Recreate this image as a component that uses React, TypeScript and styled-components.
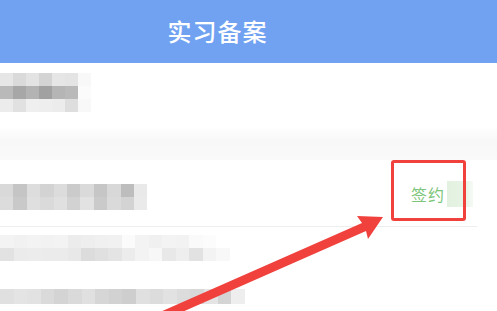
import * as React from "react";
import styled, { createGlobalStyle } from "styled-components";

const GlobalStyle = createGlobalStyle`
  html, body {
    margin: 0;
    padding: 0;
    background: #ffffff;
  }
  body {
    font-family: "Noto Sans CJK SC", "Noto Sans", sans-serif;
  }
`;

// blurred (mosaic) text blocks, one array of cell colours per row
const mosaics: { cell: number; rowHeight: number; rows: string[][] }[] = [
  {
    cell: 13,
    rowHeight: 13,
    rows: [
      ["#e6e6e6", "#dadada", "#e3e3e3", "#d4d4d4", "#e6e6e6", "#e4e4e4", "#f8f8f8"],
      ["#b9b9b9", "#a7a7a7", "#b3b3b3", "#a1a1a1", "#b5b5b5", "#b9b9b9", "#fbfbfb"],
      ["#ececec", "#e1e1e1", "#efefef", "#eeeeee", "#ececec", "#dedede", "#f8f8f8"],
    ],
  },
  {
    cell: 13.4,
    rowHeight: 13,
    rows: [
      ["#d9d9d9", "#c5c5c5", "#dddddd", "#d3d3d3", "#dcdcdc", "#cbcbcb", "#dadada", "#c6c6c6", "#d8d8d8", "#bdbdbd", "#e9e9e9"],
      ["#dcdcdc", "#c9c9c9", "#dfdfdf", "#dadada", "#e0e0e0", "#d2d2d2", "#e2e2e2", "#cacaca", "#dadada", "#d3d3d3", "#eaeaea"],
    ],
  },
  {
    cell: 13.5,
    rowHeight: 13,
    rows: [
      ["#f3f3f3", "#f1f1f1", "#f3f3f3", "#f2f2f2", "#f3f3f3", "#ececec", "#eeeeee", "#f0f0f0", "#f1f1f1", "#fbfbfb", "#f3f3f3", "#f0f0f0", "#f3f3f3", "#f2f2f2", "#fafafa", "#fcfcfc", "#ffffff"],
      ["#e2e2e2", "#ebebeb", "#ececec", "#ebebeb", "#ebebeb", "#e8e8e8", "#dcdcdc", "#e0e0e0", "#e4e4e4", "#ececec", "#f3f3f3", "#f7f7f7", "#e8e8e8", "#eeeeee", "#e2e2e2", "#f3f3f3", "#f8f8f8"],
    ],
  },
  {
    cell: 13.6,
    rowHeight: 15,
    rows: [
      ["#e0e0e0", "#e4e4e4", "#e2e2e2", "#dadada", "#d4d4d4", "#dadada", "#e0e0e0", "#d6d6d6", "#d2d2d2", "#cecece", "#e0e0e0", "#dcdcdc", "#e2e2e2", "#dcdcdc", "#d8d8d8", "#e4e4e4", "#d4d4d4", "#eeeeee"],
    ],
  },
];

const Page = styled.div`
  position: relative;
  width: 497px;
  height: 311px;
  overflow: hidden;
  background: #ffffff;
`;

const Header = styled.header`
  height: 63px;
  background: #71a2f2;
  display: flex;
  align-items: center;
  justify-content: center;
  padding-right: 62px;
  box-sizing: border-box;
`;

const Title = styled.h1`
  margin: 0;
  color: #ffffff;
  font-size: 24px;
  font-weight: 500;
  letter-spacing: 1px;
  line-height: 1;
  padding-bottom: 1px;
`;

const TopItem = styled.div`
  padding: 10px 0 16px;
`;

const Band = styled.div`
  height: 32px;
  background: linear-gradient(#fefefe, #f8f8f8 40%, #fafafa);
`;

const Row = styled.div`
  height: 66px;
  display: flex;
  align-items: center;
  justify-content: space-between;
  border-bottom: 1px solid #eeeeee;
  margin-right: 20px;
`;

const Item = styled.div<{ $pad: string }>`
  padding: ${(p) => p.$pad};
`;

const MosaicBox = styled.div`
  display: flex;
  flex-direction: column;
`;

const MosaicRow = styled.div<{ $h: number }>`
  display: flex;
  height: ${(p) => p.$h}px;
`;

const Cell = styled.span<{ $w: number; $c: string }>`
  width: ${(p) => p.$w}px;
  background: ${(p) => p.$c};
  flex: 0 0 auto;
`;

const Action = styled.div`
  display: flex;
  align-items: center;
  padding-top: 2px;
  margin-right: 4px;
`;

const SignText = styled.span`
  color: #7cc67a;
  font-size: 16px;
  letter-spacing: 1px;
`;

const Blur = styled.span`
  width: 26px;
  height: 26px;
  margin-left: 2px;
  background: linear-gradient(90deg, #e2f1df, #e8f4e6 70%, #f6faf5);
`;

const Highlight = styled.div`
  position: absolute;
  left: 391px;
  top: 160px;
  width: 75px;
  height: 61px;
  box-sizing: border-box;
  border: 3px solid #f0413d;
  border-radius: 3px;
`;

const Arrow = styled.svg`
  position: absolute;
  left: 0;
  top: 0;
`;

function Mosaic({ index }: { index: number }) {
  const m = mosaics[index];
  return (
    <MosaicBox>
      {m.rows.map((row, r) => (
        <MosaicRow key={r} $h={m.rowHeight}>
          {row.map((c, i) => (
            <Cell key={i} $w={m.cell} $c={c} />
          ))}
        </MosaicRow>
      ))}
    </MosaicBox>
  );
}

export default function App() {
  return (
    <Page>
      <GlobalStyle />
      <Header>
        <Title>实习备案</Title>
      </Header>
      <TopItem>
        <Mosaic index={0} />
      </TopItem>
      <Band />
      <Row>
        <Item $pad="8px 0 0">
          <Mosaic index={1} />
        </Item>
        <Action>
          <SignText>签约</SignText>
          <Blur />
        </Action>
      </Row>
      <Item $pad="8px 0 0">
        <Mosaic index={2} />
      </Item>
      <Item $pad="28px 0 0">
        <Mosaic index={3} />
      </Item>
      <Highlight />
      <Arrow width="497" height="311" viewBox="0 0 497 311">
        <polygon
          fill="#f0413d"
          points="383,217 368,239 366,231 155,324 151,316 362,223 357,216"
        />
      </Arrow>
    </Page>
  );
}
